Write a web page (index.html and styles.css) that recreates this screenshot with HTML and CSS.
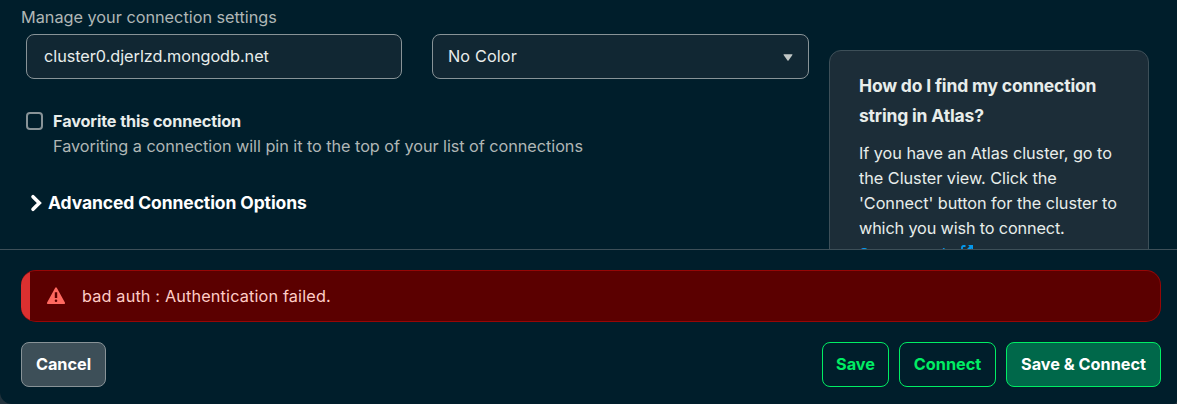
FILE: index.html
```html
<!DOCTYPE html>
<html lang="en">
<head>
<meta charset="utf-8">
<title>Connection settings</title>
<link rel="stylesheet" href="styles.css">
</head>
<body>
<div class="modal">
  <div class="content">
    <main class="form">
      <p class="subtitle"><span class="t-subtitle">Manage your connection settings</span></p>
      <div class="fields">
        <div class="field name-field"><span class="t-name">cluster0.djerlzd.mongodb.net</span></div>
        <div class="field color-field"><span class="t-color">No Color</span>
          <svg class="caret" width="10" height="7" viewBox="0 0 10 7"><path d="M1 .3h8q.8 0 .4.7L5.5 6.4q-.5.6-1 0L.6 1Q.2.3 1 .3z" fill="#c1c7c6"/></svg>
        </div>
      </div>
      <div class="favorite">
        <span class="checkbox"></span>
        <div>
          <div class="favorite-label"><span class="t-fav">Favorite this connection</span></div>
          <div class="favorite-text"><span class="t-favtext">Favoriting a connection will pin it to the top of your list of connections</span></div>
        </div>
      </div>
      <div class="advanced">
        <svg width="12" height="18" viewBox="0 0 12 18"><path d="M3 2.700 9.300 9 3 15.300" fill="none" stroke="#fff" stroke-width="3.600" stroke-linecap="round" stroke-linejoin="miter"/></svg>
        <span class="t-adv">Advanced Connection Options</span>
      </div>
    </main>
    <aside class="card">
      <h2><span class="t-h1">How do I find my connection</span><br><span class="t-h2">string in Atlas?</span></h2>
      <p><span class="t-p1">If you have an Atlas cluster, go to</span><br><span class="t-p1">the Cluster view. Click the</span><br><span class="t-p1">'Connect' button for the cluster to</span><br><span class="t-p4">which you wish to connect.</span></p>
      <a class="link"><span>See example</span><svg width="14" height="14" viewBox="0 0 14 14"><path d="M5.500 2H3.500Q2 2 2 3.500v7Q2 12 3.500 12h7q1.500 0 1.500-1.500V9" fill="none" stroke="#0498ec" stroke-width="1.800"/><path d="M8 1h5v5l-1.500-1.500L8 8 6 6l3.500-3.500z" fill="#0498ec"/></svg></a>
    </aside>
  </div>
  <footer class="footer">
    <div class="banner">
      <svg width="20" height="18" viewBox="0 0 20 18"><path fill="#ff6960" fill-rule="evenodd" d="M9.100.9q.9-1.300 1.800 0l8 14.600q.7 1.400-.8 1.500H1.900Q.4 16.900 1.100 15.500zM8.800 5.300v5.800h2.400V5.300zM10 12.400a1.300 1.300 0 1 0 0 2.600 1.300 1.300 0 0 0 0-2.600z"/></svg>
      <span class="t-banner">bad auth : Authentication failed.</span>
    </div>
    <div class="actions">
      <button class="btn cancel"><span>Cancel</span></button>
      <div class="right">
        <button class="btn save"><span>Save</span></button>
        <button class="btn connect"><span>Connect</span></button>
        <button class="btn primary"><span>Save &amp; Connect</span></button>
      </div>
    </div>
  </footer>
</div>
</body>
</html>
```
FILE: styles.css
```css
* { box-sizing: border-box; }
body { margin: 0; background: #22323c; font: 16.25px/25px Inter, "Open Sans", sans-serif; }
.modal { width: 1177px; height: 404px; background: #001e2b; border-radius: 0 0 4px 12px; overflow: hidden; }
.modal span { white-space: nowrap; }
p, h2 { margin: 0; }
.t-name { letter-spacing: -0.04px; }
.t-color { letter-spacing: 0.12px; }
.t-fav { letter-spacing: -0.13px; }
.t-favtext { letter-spacing: -0.05px; }
.t-adv { letter-spacing: -0.1px; }
.t-h1, .t-h2 { letter-spacing: -0.18px; }
.t-p1 { letter-spacing: -0.04px; }
.t-p4 { letter-spacing: -0.15px; }
.t-banner { letter-spacing: 0.15px; }
.content { height: 249px; display: flex; overflow: hidden; }
.form { width: 829px; padding: 5px 20px 0 21px; flex: none; }
.subtitle { color: #b0b7b6; }
.fields { display: flex; gap: 30px; padding: 4px 0 0 5px; }
.field { display: flex; align-items: center; justify-content: space-between; height: 45px; border: 1px solid #889397; border-radius: 8px; background: #112733; color: #e8edeb; padding: 0 15px 0 17px; }
.name-field { width: 376px; }
.color-field { width: 377px; padding-left: 15px; }
.caret { margin-top: 2px; }
.favorite { display: flex; gap: 10px; padding: 30px 0 0 5px; color: #e8edeb; }
.checkbox { width: 17px; height: 18px; margin-top: 3px; border: 2px solid #889397; border-radius: 4px; }
.favorite-label { font-weight: 700; }
.favorite-text { color: #b0b7b6; }
.advanced { display: flex; align-items: center; gap: 6px; padding: 31px 0 0 9px; color: #fff; font-size: 17.500px; font-weight: 700; }
.card { width: 320px; height: 260px; flex: none; margin-top: 50px; border: 1px solid #3d4f58; border-radius: 12px; background: #1c2d38; padding: 20px 29px; color: #e8edeb; }
.card h2 { font-size: 17.500px; line-height: 30px; margin-bottom: 10px; }
.card p { line-height: 25px; }
.link { display: flex; gap: 5px; padding-top: 1px; color: #0498ec; letter-spacing: -0.25px; }
.link svg { margin-top: 2px; }
.footer { height: 155px; border-top: 1px solid #3d4f58; padding: 20px 16px 0 21px; }
.banner { height: 52px; display: flex; align-items: center; gap: 16px; padding-left: 25px; border: 1px solid #970606; border-left: 0; border-radius: 15px; background: linear-gradient(90deg, #db3030 9px, #5b0000 9px); color: #ffcdc7; }
.actions { display: flex; justify-content: space-between; margin-top: 20px; }
.right { display: flex; gap: 10px; }
.btn { height: 45px; padding: 0; border: 1px solid #00ed64; border-radius: 8px; background: transparent; color: #00ed64; font: 700 16.250px/25px Inter, "Open Sans", sans-serif; }
.cancel { width: 85px; border-color: #889397; background: #3d4f58; color: #fff; }
.save { width: 67px; }
.connect { width: 97px; }
.primary { width: 155px; background: #00684a; color: #fff; }
```
